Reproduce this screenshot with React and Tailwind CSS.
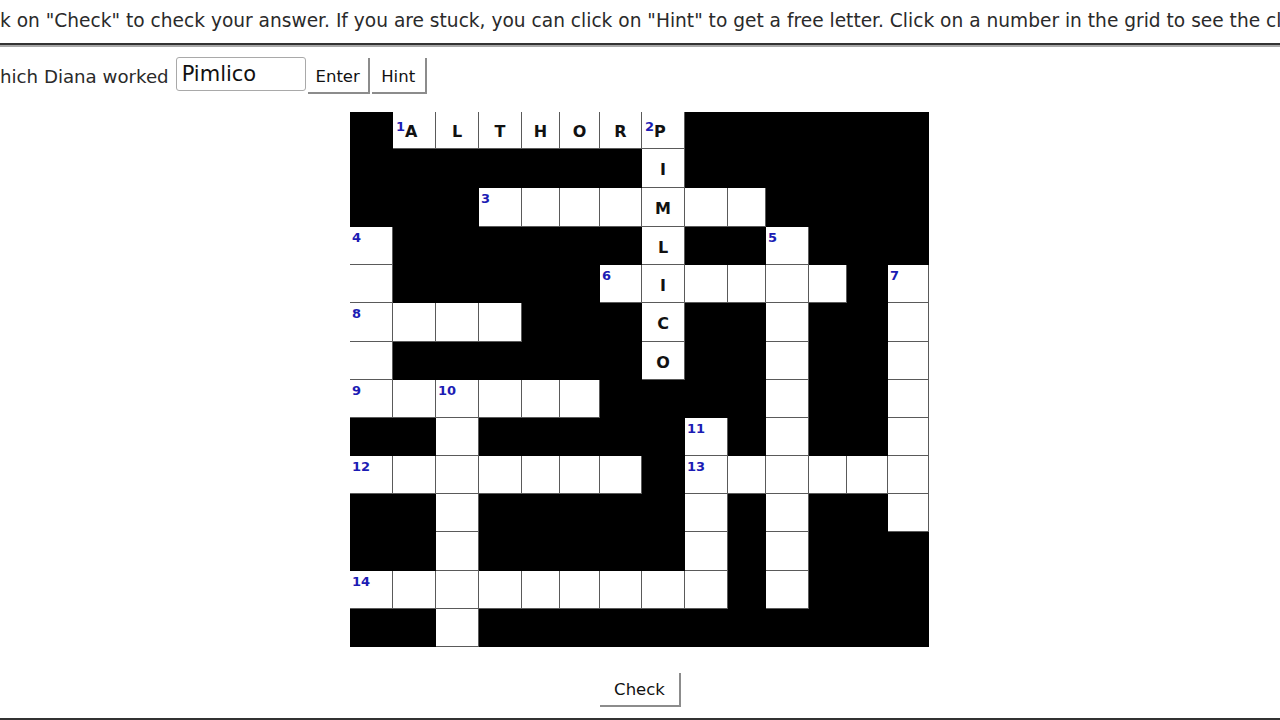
import React from "react";

const COLS = [43, 43, 43, 43, 38, 40, 42, 43, 43, 38, 43, 38, 41, 41];
const ROWS = [37, 39, 39, 38, 38, 39, 38, 38, 38, 38, 38, 39, 38, 38];

const GRID = [
  ["#", "1A", "L", "T", "H", "O", "R", "2P", "#", "#", "#", "#", "#", "#"],
  ["#", "#", "#", "#", "#", "#", "#", "I", "#", "#", "#", "#", "#", "#"],
  ["#", "#", "#", "3", ".", ".", ".", "M", ".", ".", "#", "#", "#", "#"],
  ["4", "#", "#", "#", "#", "#", "#", "L", "#", "#", "5", "#", "#", "#"],
  [".", "#", "#", "#", "#", "#", "6", "I", ".", ".", ".", ".", "#", "7"],
  ["8", ".", ".", ".", "#", "#", "#", "C", "#", "#", ".", "#", "#", "."],
  [".", "#", "#", "#", "#", "#", "#", "O", "#", "#", ".", "#", "#", "."],
  ["9", ".", "10", ".", ".", ".", "#", "#", "#", "#", ".", "#", "#", "."],
  ["#", "#", ".", "#", "#", "#", "#", "#", "11", "#", ".", "#", "#", "."],
  ["12", ".", ".", ".", ".", ".", ".", "#", "13", ".", ".", ".", ".", "."],
  ["#", "#", ".", "#", "#", "#", "#", "#", ".", "#", ".", "#", "#", "."],
  ["#", "#", ".", "#", "#", "#", "#", "#", ".", "#", ".", "#", "#", "#"],
  ["14", ".", ".", ".", ".", ".", ".", ".", ".", "#", ".", "#", "#", "#"],
  ["#", "#", ".", "#", "#", "#", "#", "#", "#", "#", "#", "#", "#", "#"],
];

function Cell({ token }) {
  if (token === "#") {
    return <div className="bg-black" />;
  }
  const base = "bg-white border-r border-b border-[#5a5a5a] overflow-hidden";
  if (token === ".") {
    return <div className={base} />;
  }
  const numOnly = /^\d+$/.test(token);
  const numLetter = token.match(/^(\d+)([A-Z])$/);
  if (numOnly) {
    return (
      <div className={base + " pl-[2px] pt-[3px]"}>
        <span className="block text-[13px] leading-[15px] font-bold text-[#1c1cb4]">
          {token}
        </span>
      </div>
    );
  }
  if (numLetter) {
    return (
      <div className={base + " flex items-center pl-[3px]"}>
        <span className="relative -top-[4px] text-[13px] leading-[13px] font-bold text-[#1c1cb4]">
          {numLetter[1]}
        </span>
        <span className="text-[16px] leading-[18px] font-bold text-[#111] pt-[4px]">
          {numLetter[2]}
        </span>
      </div>
    );
  }
  return (
    <div className={base + " flex items-center justify-center"}>
      <span className="text-[16px] leading-[18px] font-bold text-[#111] pt-[4px]">
        {token}
      </span>
    </div>
  );
}

function Crossword() {
  return (
    <div
      className="grid bg-black"
      style={{
        gridTemplateColumns: COLS.map((c) => c + "px").join(" "),
        gridTemplateRows: ROWS.map((r) => r + "px").join(" "),
      }}
    >
      {GRID.flatMap((row, r) =>
        row.map((t, c) => <Cell key={r + "-" + c} token={t} />)
      )}
    </div>
  );
}

function OldButton({ children, className = "" }) {
  return (
    <button
      type="button"
      className={
        "bg-white border-r-2 border-b-2 border-[#8c8c8c] text-[16.5px] leading-[20px] text-[#111] font-['DejaVu_Sans',sans-serif] " +
        className
      }
    >
      {children}
    </button>
  );
}

export default function App() {
  return (
    <div className="w-[1280px] h-[720px] overflow-hidden bg-white text-[#222] font-['DejaVu_Sans',sans-serif] flex flex-col">
      <div className="h-[43px] pt-[9px] whitespace-nowrap text-[18.6px] leading-[24px] text-[#2a2a2a]">
        k on "Check" to check your answer. If you are stuck, you can click on "Hint" to get a free letter. Click on a number in the grid to see the clue.
      </div>
      <div className="h-[4px] border-t-2 border-t-[#333] border-b-2 border-b-[#a8a8a8]" />
      <div className="mt-[10px] flex items-start whitespace-nowrap">
        <span className="text-[18.2px] leading-[24px] mt-[8px] text-[#2a2a2a]">hich Diana worked</span>
        <input
          readOnly
          defaultValue="Pimlico"
          className="ml-[7px] w-[130px] h-[34px] border border-[#a9a9a9] rounded-[3px] px-[5px] text-[21px] text-[#111] font-['DejaVu_Sans',sans-serif] outline-none"
        />
        <OldButton className="ml-[2px] mt-[1px] w-[62px] h-[36px] pt-[3px]">Enter</OldButton>
        <OldButton className="ml-[2px] mt-[1px] w-[55px] h-[36px] pt-[3px]">Hint</OldButton>
      </div>
      <div className="mt-[18px] flex justify-center pr-[1px]">
        <Crossword />
      </div>
      <div className="mt-[26px] flex justify-center">
        <OldButton className="w-[81px] h-[34px] pl-[1px] pt-[2px]">Check</OldButton>
      </div>
      <div className="mt-[11px] border-t-2 border-[#333]" />
    </div>
  );
}
